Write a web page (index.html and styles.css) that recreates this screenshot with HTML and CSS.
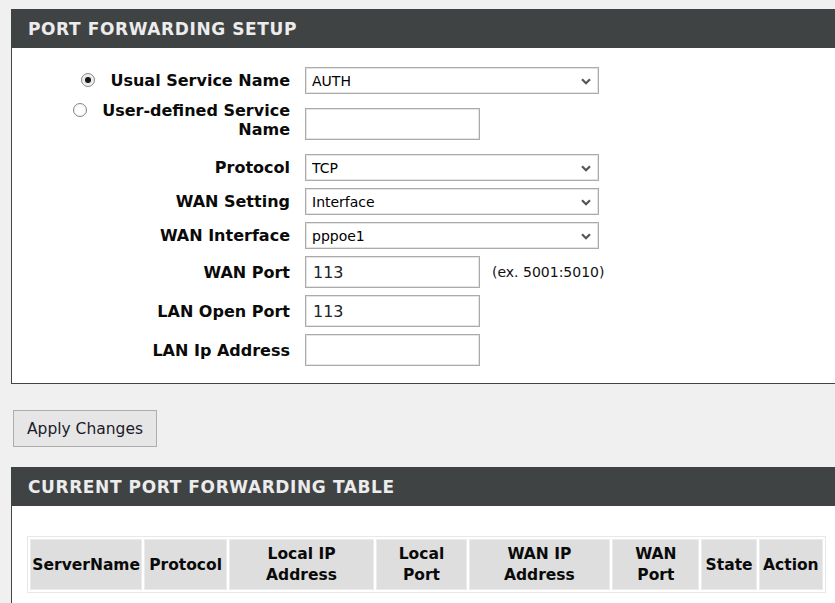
FILE: index.html
```html
<!DOCTYPE html>
<html lang="en">
<head>
<meta charset="utf-8">
<title>Port Forwarding</title>
<link rel="stylesheet" href="styles.css">
</head>
<body>
<div class="panel">
  <div class="panel-head">PORT FORWARDING SETUP</div>
  <div class="panel-body">
    <div class="form">
      <label class="lbl"><span class="radio checked"></span>Usual Service Name</label>
      <div class="ctl">
        <span class="select-wrap">
          <select class="select"><option>AUTH</option></select>
          <svg class="chev" width="10" height="7" viewBox="0 0 10 7"><path d="M1 1.2 L5 5.2 L9 1.2" fill="none" stroke="#555" stroke-width="2.2"/></svg>
        </span>
      </div>

      <label class="lbl lbl-two"><span class="radio"></span>User-defined Service<br>Name</label>
      <div class="ctl"><input class="text" type="text" value=""></div>

      <label class="lbl">Protocol</label>
      <div class="ctl">
        <span class="select-wrap">
          <select class="select"><option>TCP</option></select>
          <svg class="chev" width="10" height="7" viewBox="0 0 10 7"><path d="M1 1.2 L5 5.2 L9 1.2" fill="none" stroke="#555" stroke-width="2.2"/></svg>
        </span>
      </div>

      <label class="lbl">WAN Setting</label>
      <div class="ctl">
        <span class="select-wrap">
          <select class="select"><option>Interface</option></select>
          <svg class="chev" width="10" height="7" viewBox="0 0 10 7"><path d="M1 1.2 L5 5.2 L9 1.2" fill="none" stroke="#555" stroke-width="2.2"/></svg>
        </span>
      </div>

      <label class="lbl">WAN Interface</label>
      <div class="ctl">
        <span class="select-wrap">
          <select class="select"><option>pppoe1</option></select>
          <svg class="chev" width="10" height="7" viewBox="0 0 10 7"><path d="M1 1.2 L5 5.2 L9 1.2" fill="none" stroke="#555" stroke-width="2.2"/></svg>
        </span>
      </div>

      <label class="lbl">WAN Port</label>
      <div class="ctl"><input class="text" type="text" value="113"><span class="hint">(ex. 5001:5010)</span></div>

      <label class="lbl">LAN Open Port</label>
      <div class="ctl"><input class="text" type="text" value="113"></div>

      <label class="lbl">LAN Ip Address</label>
      <div class="ctl"><input class="text" type="text" value=""></div>
    </div>
  </div>
</div>

<button class="btn" type="button">Apply Changes</button>

<div class="panel panel-table">
  <div class="panel-head">CURRENT PORT FORWARDING TABLE</div>
  <div class="panel-body table-body">
    <table class="grid">
      <colgroup>
        <col class="c1"><col class="c2"><col class="c3"><col class="c4">
        <col class="c5"><col class="c6"><col class="c7"><col class="c8">
      </colgroup>
      <thead>
        <tr>
          <th>ServerName</th>
          <th>Protocol</th>
          <th>Local IP<br>Address</th>
          <th>Local<br>Port</th>
          <th>WAN IP<br>Address</th>
          <th>WAN<br>Port</th>
          <th>State</th>
          <th>Action</th>
        </tr>
      </thead>
    </table>
  </div>
</div>
</body>
</html>
```

FILE: styles.css
```css
html, body {
  margin: 0;
  background: #f0f0f0;
  overflow: hidden;
}

body {
  padding: 9px 0 0 11px;
  font-family: "DejaVu Sans", Verdana, sans-serif;
  color: #000;
}

/* section box: dark title bar, white body, left/bottom rule */
.panel {
  width: 900px;
  background: #fff;
  border-left: 1px solid #454545;
  border-bottom: 1px solid #454545;
}

.panel-head {
  height: 39px;
  margin-left: -1px;
  padding-left: 17px;
  display: flex;
  align-items: center;
  background: #404344;
  color: #ececec;
  font-weight: bold;
  font-size: 17px;
  letter-spacing: 0.6px;
}

.panel-body {
  padding: 19px 0 17px;
}

/* label / control form */
.form {
  display: grid;
  grid-template-columns: 278px auto;
  column-gap: 15px;
  row-gap: 7px;
  align-items: center;
}

.lbl {
  text-align: right;
  font-weight: bold;
  font-size: 16px;
  line-height: 19px;
  white-space: nowrap;
  color: #0a0a0a;
}

.lbl-two {
  padding-bottom: 8px;
}

.radio {
  display: inline-block;
  width: 14px;
  height: 14px;
  box-sizing: border-box;
  border: 1px solid #858585;
  border-radius: 50%;
  background: #fff;
  box-shadow: inset 0 0 0 1px #f4f4f4;
  margin-right: 15px;
  vertical-align: -1px;
  position: relative;
}

.radio.checked {
  background: #e9e9e9;
}

.radio.checked::after {
  content: "";
  position: absolute;
  left: 3px;
  top: 3px;
  width: 6px;
  height: 6px;
  border-radius: 50%;
  background: #151515;
}

.ctl {
  display: flex;
  align-items: center;
  gap: 12px;
}

.select-wrap {
  position: relative;
  display: inline-block;
}

.select {
  appearance: none;
  -webkit-appearance: none;
  width: 294px;
  height: 27px;
  margin: 0;
  padding: 0 0 0 6px;
  border: 1px solid #ababab;
  box-shadow: inset 0 0 0 1px #e4e4e4;
  border-radius: 0;
  background: #fff;
  font-family: "DejaVu Sans", Verdana, sans-serif;
  font-size: 14px;
  color: #000;
}

.chev {
  position: absolute;
  right: 8px;
  top: 11px;
  pointer-events: none;
}

.text {
  width: 175px;
  height: 32px;
  box-sizing: border-box;
  margin: 0;
  padding: 0 0 0 7px;
  border: 1px solid #ababab;
  box-shadow: inset 0 0 0 1px #e4e4e4;
  border-radius: 0;
  background: #fff;
  font-family: "DejaVu Sans", Verdana, sans-serif;
  font-size: 16px;
  color: #222;
}

.hint {
  font-size: 14px;
  color: #111;
}

.btn {
  display: block;
  margin: 26px 0 0 2px;
  width: 144px;
  height: 37px;
  padding: 0;
  border: 1px solid #adadad;
  border-radius: 0;
  background: #e6e6e6;
  font-family: "DejaVu Sans", Verdana, sans-serif;
  font-size: 15.5px;
  color: #1a1a2a;
}

.panel-table {
  margin-top: 20px;
  border-bottom: none;
  min-height: 200px;
}

.table-body {
  padding: 30px 0 0 15px;
}

.grid {
  table-layout: fixed;
  border-collapse: separate;
  border-spacing: 2px;
  border: 1px solid #e8e8e8;
  width: 799px;
}

.grid th {
  box-sizing: border-box;
  background: #dedede;
  border: 1px solid #ebebeb;
  padding: 4px 1px 3px;
  font-size: 15.5px;
  line-height: 21px;
  font-weight: bold;
  text-align: center;
  vertical-align: middle;
  white-space: nowrap;
  color: #0a0a0a;
}

.c1 { width: 112px; }
.c2 { width: 82px; }
.c3 { width: 145px; }
.c4 { width: 90px; }
.c5 { width: 141px; }
.c6 { width: 87px; }
.c7 { width: 55px; }
.c8 { width: 64px; }
```
